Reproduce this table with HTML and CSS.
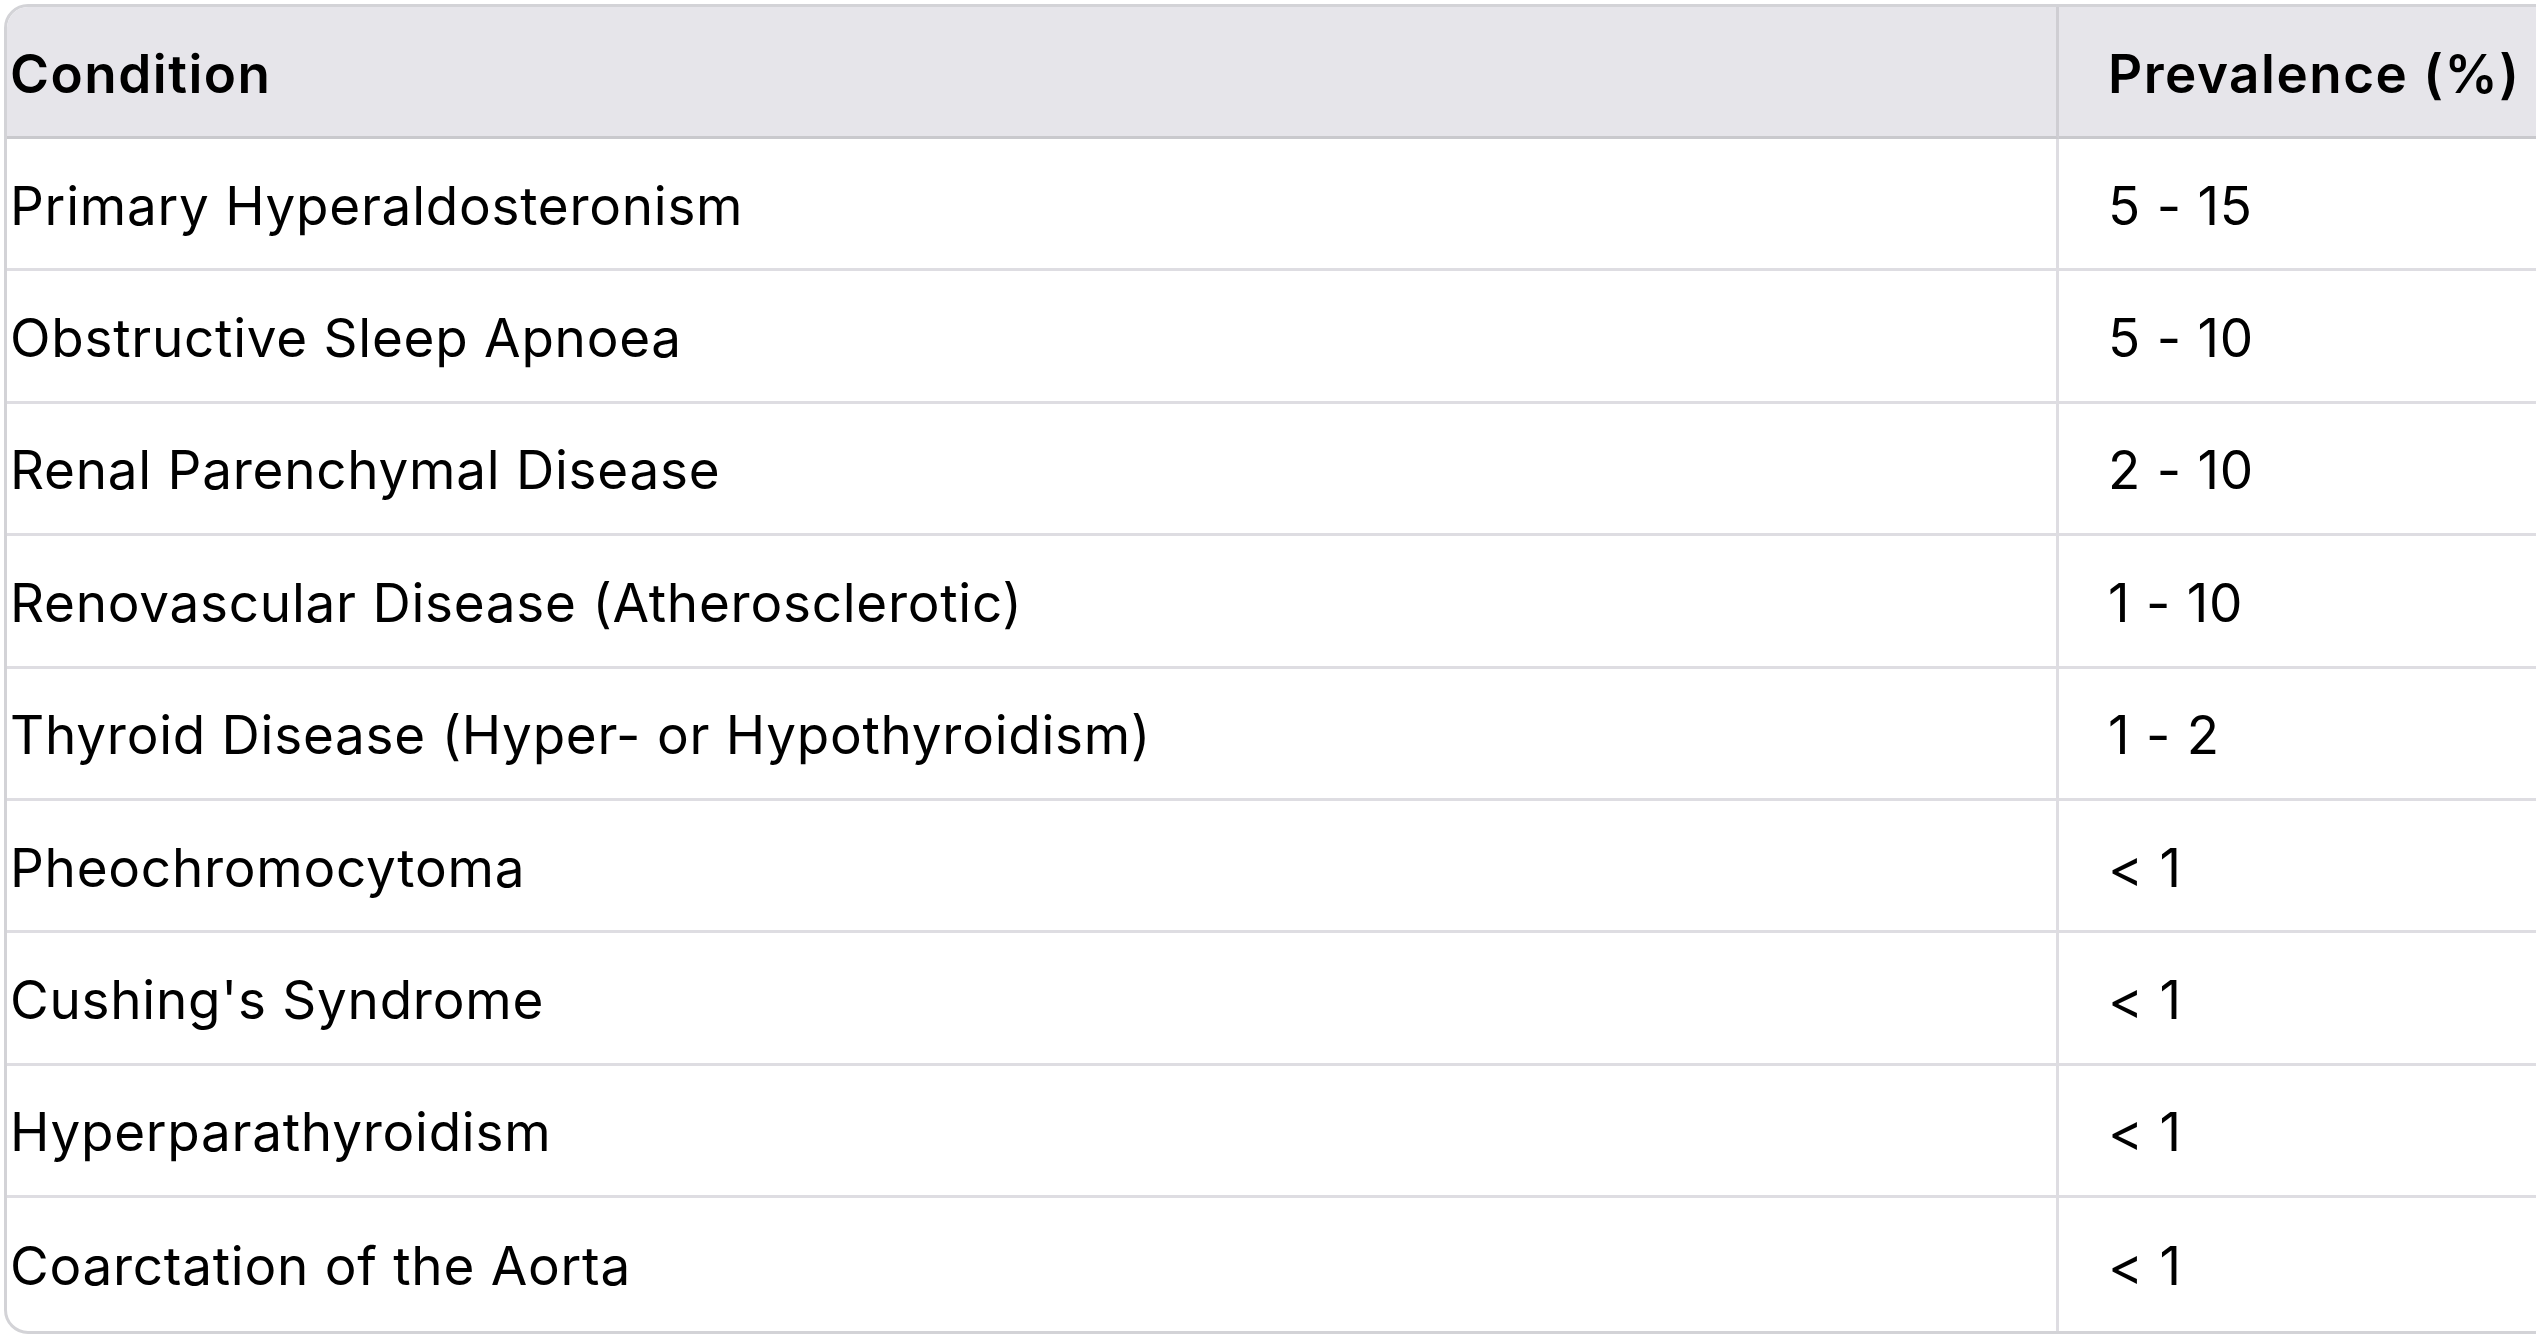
FILE: index.html
```html
<!DOCTYPE html>
<html lang="en">
<head>
<meta charset="utf-8">
<title>Secondary hypertension prevalence</title>
<link rel="stylesheet" href="styles.css">
</head>
<body>
<div class="table-wrap">
  <table class="data-table">
    <thead>
      <tr>
        <th class="col-cond">Condition</th>
        <th class="col-prev">Prevalence (%)</th>
      </tr>
    </thead>
    <tbody>
      <tr><td class="col-cond">Primary Hyperaldosteronism</td><td class="col-prev">5 - 15</td></tr>
      <tr><td class="col-cond">Obstructive Sleep Apnoea</td><td class="col-prev">5 - 10</td></tr>
      <tr><td class="col-cond">Renal Parenchymal Disease</td><td class="col-prev">2 - 10</td></tr>
      <tr><td class="col-cond">Renovascular Disease (Atherosclerotic)</td><td class="col-prev">1 - 10</td></tr>
      <tr><td class="col-cond">Thyroid Disease (Hyper- or Hypothyroidism)</td><td class="col-prev">1 - 2</td></tr>
      <tr><td class="col-cond">Pheochromocytoma</td><td class="col-prev">&lt; 1</td></tr>
      <tr><td class="col-cond">Cushing's Syndrome</td><td class="col-prev">&lt; 1</td></tr>
      <tr><td class="col-cond">Hyperparathyroidism</td><td class="col-prev">&lt; 1</td></tr>
      <tr><td class="col-cond">Coarctation of the Aorta</td><td class="col-prev">&lt; 1</td></tr>
    </tbody>
  </table>
</div>
</body>
</html>
```

FILE: styles.css
```css
html, body {
  margin: 0;
  padding: 0;
  background: #ffffff;
  overflow: hidden;
}

body {
  font-family: Inter, "Noto Sans", "Liberation Sans", sans-serif;
  color: #000000;
}

.table-wrap {
  margin: 4px 0 0 4px;
  width: 2700px;
  border: 3px solid #d3d3d7;
  border-radius: 24px;
  overflow: hidden;
}

.data-table {
  width: 100%;
  border-collapse: separate;
  border-spacing: 0;
  table-layout: fixed;
  font-size: 53px;
}

.data-table th,
.data-table td {
  box-sizing: border-box;
  padding: 4px 0 0 0;
  text-align: left;
  vertical-align: middle;
  white-space: nowrap;
}

.data-table th {
  height: 132px;
  background: #e6e5ea;
  font-weight: 600;
  letter-spacing: 1.5px;
  border-bottom: 3px solid #c9c9cd;
}

.data-table td {
  height: 132.4px;
  font-weight: 400;
  letter-spacing: 0.75px;
  border-bottom: 3px solid #dedde2;
}

.data-table tbody tr:last-child td {
  border-bottom: none;
}

.col-cond {
  width: 2052px;
  padding-left: 3px !important;
  border-right: 3px solid #dedde2;
}

.data-table th.col-cond {
  border-right-color: #cfced3;
}

.col-prev {
  padding-left: 49px !important;
}
```
